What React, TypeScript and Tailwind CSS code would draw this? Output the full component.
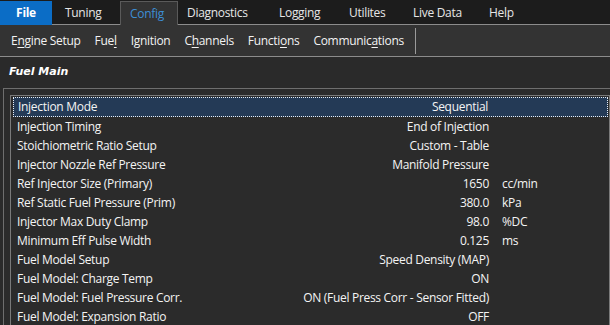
import React from 'react';

const TABS = [
    { label: 'Tuning', w: 'w-[64px]' },
    { label: 'Config', w: 'w-[58px]', active: true },
    { label: 'Diagnostics', w: 'w-[92px]' },
    { label: 'Logging', w: 'w-[70px]' },
    { label: 'Utilites', w: 'w-[64px]' },
    { label: 'Live Data', w: 'w-[76px]' },
    { label: 'Help', w: 'w-[60px]' },
];

// label split around the access-key letter
const SUBMENU: [string, string, string][] = [
    ['E', 'n', 'gine Setup'],
    ['Fue', 'l', ''],
    ['I', 'g', 'nition'],
    ['C', 'h', 'annels'],
    ['Functi', 'o', 'ns'],
    ['Communic', 'a', 'tions'],
];

const ROWS = [
    { name: 'Injection Mode', value: 'Sequential', unit: '' },
    { name: 'Injection Timing', value: 'End of Injection', unit: '' },
    { name: 'Stoichiometric Ratio Setup', value: 'Custom - Table', unit: '' },
    { name: 'Injector Nozzle Ref Pressure', value: 'Manifold Pressure', unit: '' },
    { name: 'Ref Injector Size (Primary)', value: '1650', unit: 'cc/min' },
    { name: 'Ref Static Fuel Pressure (Prim)', value: '380.0', unit: 'kPa' },
    { name: 'Injector Max Duty Clamp', value: '98.0', unit: '%DC' },
    { name: 'Minimum Eff Pulse Width', value: '0.125', unit: 'ms' },
    { name: 'Fuel Model Setup', value: 'Speed Density (MAP)', unit: '' },
    { name: 'Fuel Model: Charge Temp', value: 'ON', unit: '' },
    { name: 'Fuel Model: Fuel Pressure Corr.', value: 'ON (Fuel Press Corr - Sensor Fitted)', unit: '' },
    { name: 'Fuel Model: Expansion Ratio', value: 'OFF', unit: '' },
];

export default function App() {
    return (
        <div className="w-[610px] h-[325px] overflow-hidden bg-[#2a2a2a] text-[12px] tracking-[-0.3px] text-[#f4f4f4] flex flex-col" style={{ fontFamily: '"Open Sans", "Noto Sans", sans-serif' }}>
            {/* top menu */}
            <div className="h-[25px] shrink-0 flex items-end bg-[#1c1c1c] border-b border-[#8c8c8c]">
                <div className="w-[52px] h-[24px] mb-[-1px] flex items-center justify-center bg-[#0b6dc6] font-bold text-white">File</div>
                <div className="w-[4px]" />
                {TABS.map(t => (
                    <div
                        key={t.label}
                        className={`${t.w} h-[23px] pl-[9px] flex items-center ${t.active ? 'bg-[#333333] border-t border-x border-[#5a5a5a] mb-[-1px] h-[24px] pl-[8px] text-[#3d8fd6]' : 'text-[#e6e6e6]'}`}
                    >
                        {t.label}
                    </div>
                ))}
            </div>

            {/* sub menu */}
            <div className="h-[32px] shrink-0 flex items-center bg-[#333333] border-b border-[#8c8c8c] pl-[11px]">
                <div className="flex items-center gap-x-[14px]">
                    {SUBMENU.map(([a, k, b]) => (
                        <span key={a + k + b} className="text-[#f2f2f2]">
                            {a}<span className="underline underline-offset-2">{k}</span>{b}
                        </span>
                    ))}
                </div>
                <div className="ml-[11px] w-px h-[26px] bg-[#9a9a9a]" />
            </div>

            {/* title */}
            <div className="h-[31px] shrink-0 flex items-center pl-[9px]">
                <span className="font-bold italic text-[11px] tracking-normal text-white" style={{ fontFamily: '"DejaVu Sans", sans-serif' }}>Fuel Main</span>
            </div>

            {/* panel */}
            <div className="flex-1 ml-[3px] border-t border-l border-[#6e6e6e] pl-[6px] pt-[6px] bg-[#2b2b2b]">
                <div className="h-full border-t border-l border-r border-[#7a7a7a] pl-[2px] pr-[1px] pt-[1px]">
                    {ROWS.map((r, i) => (
                        <div
                            key={r.name}
                            className={`h-[19px] flex items-center pl-[4px] ${i === 0 ? 'bg-[#243a56] border border-dotted border-[#e8eef5] h-[20px] pl-[2px]' : ''}`}
                        >
                            <span className="flex-1 whitespace-nowrap">{r.name}</span>
                            <span className="whitespace-nowrap text-right">{r.value}</span>
                            <span className="w-[106px] ml-[13px] whitespace-nowrap">{r.unit}</span>
                        </div>
                    ))}
                </div>
            </div>
        </div>
    );
}
